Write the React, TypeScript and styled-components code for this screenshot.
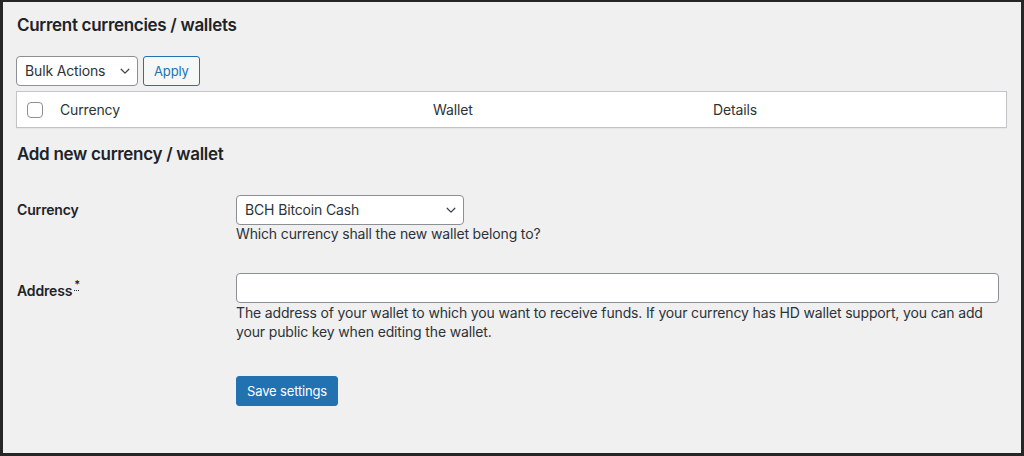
import React from "react";
import styled, { createGlobalStyle } from "styled-components";

const Global = createGlobalStyle`
  html, body { margin: 0; padding: 0; background: #f0f0f1; }
  body { font-family: Inter, "Noto Sans", "Liberation Sans", sans-serif; color: #1d2327; letter-spacing: -0.15px; }
  * { box-sizing: border-box; }
`;

const Frame = styled.div`
  width: 1024px;
  height: 456px;
  overflow: hidden;
  background: #f0f0f1;
  border-style: solid;
  border-color: #262626;
  border-width: 2px 3px 3px 3px;
  padding: 12px 14px 0 13px;
`;

const Heading = styled.h2<{ $top?: number }>`
  margin: ${(p) => p.$top ?? 0}px 0 0 0;
  font-size: 17px;
  line-height: 22px;
  font-weight: 600;
  color: #1d2327;
  padding-left: 1px;
  letter-spacing: -0.3px;
`;

const Toolbar = styled.div`
  display: flex;
  gap: 5px;
  margin-top: 20px;
`;

const SelectWrap = styled.div<{ $width: number }>`
  position: relative;
  width: ${(p) => p.$width}px;
  height: 30px;
`;

const Select = styled.select`
  appearance: none;
  -webkit-appearance: none;
  width: 100%;
  height: 100%;
  border: 1px solid #8c8f94;
  border-radius: 4px;
  background: #fff;
  color: #2c3338;
  font-family: inherit;
  letter-spacing: inherit;
  font-size: 14px;
  padding: 0 24px 0 8px;
  line-height: 28px;
  outline: none;
`;

const Chevron = styled.svg`
  position: absolute;
  right: 6px;
  top: 8px;
  width: 14px;
  height: 14px;
  pointer-events: none;
`;

const SecondaryButton = styled.button`
  height: 30px;
  padding: 0 10px;
  border: 1px solid #2271b1;
  border-radius: 3px;
  background: #f6f7f7;
  color: #2271b1;
  font-family: inherit;
  letter-spacing: inherit;
  font-size: 13px;
  line-height: 28px;
`;

const PrimaryButton = styled.button`
  height: 30px;
  padding: 0 10px;
  border: 1px solid #2271b1;
  border-radius: 3px;
  background: #2271b1;
  color: #fff;
  font-family: inherit;
  letter-spacing: inherit;
  font-size: 13px;
  line-height: 28px;
`;

const Table = styled.div`
  margin-top: 5px;
  background: #fff;
  border: 1px solid #c3c4c7;
  box-shadow: 0 1px 1px rgba(0, 0, 0, 0.04);
`;

const HeadRow = styled.div`
  display: grid;
  grid-template-columns: 35px 373px 280px 1fr;
  height: 35px;
  align-items: center;
`;

const HeadCell = styled.div`
  padding-left: 8px;
  font-size: 14px;
  color: #2c3338;
`;

const CheckCell = styled.div`
  padding-left: 10px;
  display: flex;
  align-items: center;
`;

const Checkbox = styled.span`
  display: block;
  width: 16px;
  height: 16px;
  border: 1px solid #8c8f94;
  border-radius: 4px;
  background: #fff;
`;

const FormTable = styled.div`
  margin-top: 15px;
  display: grid;
  grid-template-columns: 220px 1fr;
`;

const Label = styled.div<{ $pt: number }>`
  padding-top: ${(p) => p.$pt}px;
  font-size: 14px;
  font-weight: 600;
  line-height: 18px;
  color: #1d2327;
  padding-left: 1px;
`;

const Field = styled.div<{ $pt: number; $pb: number }>`
  padding: ${(p) => p.$pt}px 8px ${(p) => p.$pb}px 0;
`;

const TextInput = styled.input`
  display: block;
  width: 100%;
  height: 30px;
  border: 1px solid #8c8f94;
  border-radius: 4px;
  background: #fff;
  outline: none;
  padding: 0 8px;
`;

const Description = styled.p<{ $lh: number }>`
  margin: 0;
  font-size: 14px;
  line-height: ${(p) => p.$lh}px;
  color: #2c3338;
`;

const Required = styled.sup`
  font-size: 11px;
  line-height: 0;
  margin-left: 2px;
  position: relative;
  top: -2px;
`;

const Abbr = styled.abbr`
  text-decoration: underline dotted;
  text-decoration-thickness: 1px;
  text-underline-offset: 2px;
  cursor: help;
`;

const Submit = styled.div`
  padding-top: 35px;
`;

function ChevronIcon() {
  return (
    <Chevron viewBox="0 0 20 20" fill="none">
      <path d="M4.5 7.5l5.5 5.5 5.5-5.5" stroke="#3c434a" strokeWidth="1.8" strokeLinecap="round" strokeLinejoin="round" />
    </Chevron>
  );
}

export default function App() {
  return (
    <>
      <Global />
      <Frame>
        <Heading>Current currencies / wallets</Heading>
        <Toolbar>
          <SelectWrap $width={122}>
            <Select defaultValue="-1">
              <option value="-1">Bulk Actions</option>
              <option value="delete">Delete</option>
            </Select>
            <ChevronIcon />
          </SelectWrap>
          <SecondaryButton>Apply</SecondaryButton>
        </Toolbar>
        <Table>
          <HeadRow>
            <CheckCell>
              <Checkbox />
            </CheckCell>
            <HeadCell>Currency</HeadCell>
            <HeadCell>Wallet</HeadCell>
            <HeadCell>Details</HeadCell>
          </HeadRow>
        </Table>
        <Heading $top={15}>Add new currency / wallet</Heading>
        <FormTable>
          <Label $pt={21}>Currency</Label>
          <Field $pt={15} $pb={15}>
            <SelectWrap $width={228}>
              <Select defaultValue="BCH">
                <option value="BCH">BCH Bitcoin Cash</option>
                <option value="BTC">BTC Bitcoin</option>
              </Select>
              <ChevronIcon />
            </SelectWrap>
            <Description $lh={18}>Which currency shall the new wallet belong to?</Description>
          </Field>
          <Label $pt={24}>
            Address
            <Required>
              <Abbr title="required">*</Abbr>
            </Required>
          </Label>
          <Field $pt={15} $pb={0}>
            <TextInput type="text" />
            <Description $lh={19}>
              The address of your wallet to which you want to receive funds. If your currency has HD wallet support, you can add
              your public key when editing the wallet.
            </Description>
            <Submit>
              <PrimaryButton>Save settings</PrimaryButton>
            </Submit>
          </Field>
        </FormTable>
      </Frame>
    </>
  );
}
